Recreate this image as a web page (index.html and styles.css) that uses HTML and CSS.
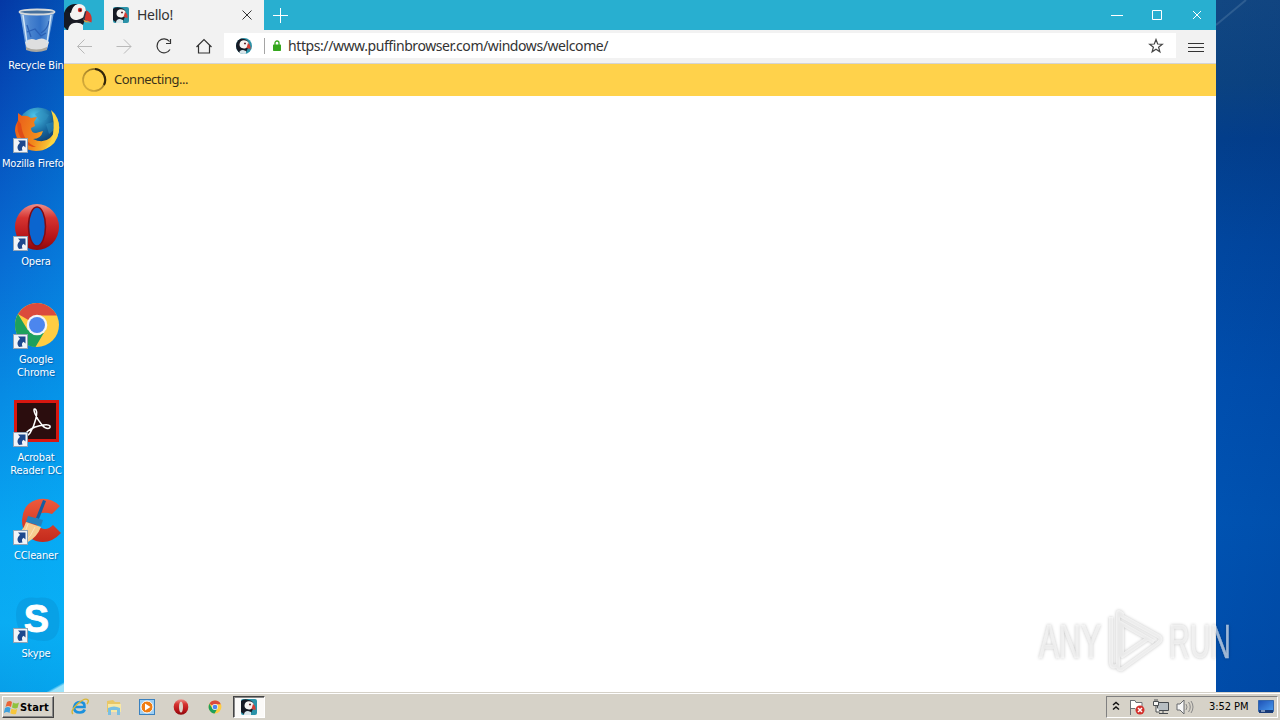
FILE: index.html
```html
<!DOCTYPE html>
<html lang="en">
<head>
<meta charset="utf-8">
<title>Desktop</title>
<link rel="stylesheet" href="styles.css">
</head>
<body>
<svg class="defs" aria-hidden="true">
  <defs>
    <linearGradient id="bin" x1="0" x2="1"><stop offset="0" stop-color="#a9cdef"/><stop offset=".3" stop-color="#5a92d6"/><stop offset=".6" stop-color="#3d7acb"/><stop offset="1" stop-color="#8dbbe5"/></linearGradient>
    <radialGradient id="globe" cx=".4" cy=".2" r=".8"><stop offset="0" stop-color="#4cc3e8"/><stop offset=".55" stop-color="#17689f"/><stop offset="1" stop-color="#0b2f63"/></radialGradient>
    <linearGradient id="fox" x1="0" x2="1" y2=".3"><stop offset="0" stop-color="#e8581b"/><stop offset=".6" stop-color="#f28a1c"/><stop offset="1" stop-color="#fbd23c"/></linearGradient>
    <linearGradient id="opera" x2="0" y2="1"><stop offset="0" stop-color="#ee8f88"/><stop offset=".3" stop-color="#d63431"/><stop offset=".7" stop-color="#b8161a"/><stop offset="1" stop-color="#8d090c"/></linearGradient>
    <linearGradient id="cc" x2="0" y2="1"><stop offset="0" stop-color="#ee5a3c"/><stop offset="1" stop-color="#c42a1c"/></linearGradient>
    <linearGradient id="spin" x1="0" y1="1" x2="1" y2="0"><stop offset="0" stop-color="#b08a2c" stop-opacity=".4"/><stop offset=".6" stop-color="#8d6d20" stop-opacity=".8"/><stop offset="1" stop-color="#2c2208"/></linearGradient>
    <linearGradient id="screen" x2="1" y2="1"><stop offset="0" stop-color="#1d50b5"/><stop offset="1" stop-color="#4a9df0"/></linearGradient>
  </defs>
  <symbol id="puffin" viewBox="0 0 40 30">
    <path d="M0 13C2 7 6 4 12 4c8 0 12 5 10 12-1 4-2 6-3 9l-3 5H3L0 27z" fill="#151a25"/>
    <path d="M4 30q1-6 6-7 6-1 9 2v5z" fill="#eef2f4"/>
    <path d="M6 14C6 8 10 4 15 4c6 0 8 5 6.500 11-2 3-5 4-8.500 5-4 0-7-2-7-6z" fill="#f4f3f1"/>
    <path d="M2 11c2-5 6-7 11-7-4 2-5 5-6 9z" fill="#10151e"/>
    <circle cx="16" cy="10" r="2.200" fill="#d32d26"/><circle cx="16.300" cy="10.300" r="1" fill="#161616"/>
    <path d="M21 11l2.500 1-1 9-4-1z" fill="#2b3446"/>
    <path d="M22.500 10.500c4 2 6 6 5 12l-7-3z" fill="#d2332c"/>
    <path d="M19 19.500l8 3-6-.3z" fill="#e99a3b"/>
  </symbol>
  <symbol id="puffapp" viewBox="0 0 16 16">
    <rect width="16" height="16" rx="2" fill="#2b93a9"/>
    <path d="M0 2Q3-1 8 1c5 1 6 5 4 9l-2 4-4-2-2 4-4-3z" fill="#161a24"/>
    <path d="M3.500 6.500c0-5 6.500-5.500 9-2 1 3-.5 5-3.500 6-3 0-5.500-1-5.500-4z" fill="#f6f4f2"/>
    <path d="M3 16q0-4 4-4l3 1v3z" fill="#d9e6ea"/>
    <circle cx="9" cy="5.500" r="1.100" fill="#9b4a50"/><circle cx="9" cy="5.500" r=".6" fill="#111"/>
    <path d="M12 5q3 2 2.500 6L10.500 10z" fill="#d63d35"/>
  </symbol>
  <symbol id="link" viewBox="0 0 15 15">
    <rect x=".5" y=".5" width="14" height="14" fill="#f1f4f8" stroke="#92a3b5"/>
    <path d="M5 2.500h7.500V9.500L10.500 7.800Q8 9.500 9.500 12.500L6 13Q2.500 9 7 4.800z" fill="#1d488d"/>
  </symbol>
  <symbol id="chrome" viewBox="0 0 48 48">
    <circle cx="24" cy="24" r="22" fill="#ffcd42"/>
    <path d="M24 24L5 13A22 22 0 0 1 43.800 14.500H24z" fill="#db4a3c"/>
    <path d="M5 13A22 22 0 0 0 22.500 46L32.500 29 24 24 14.700 29z" fill="#1da05c"/>
    <circle cx="24" cy="24" r="10.300" fill="#f4f5f6"/><circle cx="24" cy="24" r="8" fill="#4c86ee"/>
  </symbol>
  <symbol id="operaicon" viewBox="0 0 48 48">
    <ellipse cx="24" cy="24" rx="22" ry="23" fill="url(#opera)"/>
  </symbol>
</svg>

<main class="desktop">
  <nav class="shortcuts">
    <div class="shortcut">
      <svg class="shortcut-icon" viewBox="0 0 48 48">
        <path d="M7 5l6 37q10 5 21 0l7-37z" fill="url(#bin)" opacity=".8"/>
        <path d="M12 35q5-5 11-2 7-4 13 2l-2 7q-10 4-20 0z" fill="#dedfdf"/>
        <path d="M13 40q10 5 21 0v3q-11 4-21 0z" fill="#aaa79f"/>
        <path d="M14 18l4 12M36 14q-1 8-8 12M14 25l8-3 6 7 5-3" fill="none" stroke="#2a60b5" stroke-width="1.300"/>
        <path d="M10 8l4 28M38 8l-4 28" stroke="#d2e6f7" stroke-width="1.500"/>
        <ellipse cx="24" cy="5" rx="17.500" ry="2.500" fill="#456f9c" stroke="#d7dadb" stroke-width="1.800"/>
      </svg>
      <span class="shortcut-label">Recycle Bin</span>
    </div>
    <div class="shortcut">
      <svg class="shortcut-icon" viewBox="0 0 48 48">
        <circle cx="25" cy="23" r="20.500" fill="url(#globe)"/>
        <path d="M22 9l6-3 8 4-3 5-6 1zM33 19l7-2 2 7-6 5z" fill="#2f91bf" opacity=".5"/>
        <path d="M5 8l4 3q5-1 9 2l6-1-3 5 1 4-4 2q0 5 5 5l7-2q-2 8-10 8 10 5 17-1 8-7 6-21 6 9 1 20-7 14-21 14Q5 45 2 26q0-6 3-10z" fill="url(#fox)"/>
        <path d="M38 5q9 7 8 21-2 14-14 18 7-7 8-15 2-13-2-24z" fill="#fbd442"/>
        <path d="M5 15q-3 11 5 21 5 6 13 6Q10 37 8 19z" fill="#df4c17"/>
      </svg>
      <svg class="shortcut-link"><use href="#link"/></svg>
      <span class="shortcut-label firefox">Mozilla Firefo</span>
    </div>
    <div class="shortcut">
      <svg class="shortcut-icon" viewBox="0 0 48 48">
        <use href="#operaicon" width="48" height="48"/>
        <ellipse cx="24" cy="23.500" rx="8.500" ry="19.500" fill="#0b65cf" stroke="#830b12" stroke-width="1.500"/>
      </svg>
      <svg class="shortcut-link"><use href="#link"/></svg>
      <span class="shortcut-label">Opera</span>
    </div>
    <div class="shortcut">
      <svg class="shortcut-icon"><use href="#chrome"/></svg>
      <svg class="shortcut-link"><use href="#link"/></svg>
      <span class="shortcut-label">Google<br>Chrome</span>
    </div>
    <div class="shortcut">
      <svg class="shortcut-icon" viewBox="0 0 48 48">
        <rect x="1" y="1" width="45" height="42" fill="#d81710"/><rect x="4" y="4" width="39" height="36" fill="#2b0d0e"/>
        <path d="M22 10c-3-1 1 9 7 16 4 5 9 4 8 1-2-3-18 0-24 7-1 3 2 3 4 0 5-8 9-22 5-24z" fill="none" stroke="#fff" stroke-width="1.500"/>
      </svg>
      <svg class="shortcut-link"><use href="#link"/></svg>
      <span class="shortcut-label">Acrobat<br>Reader DC</span>
    </div>
    <div class="shortcut">
      <svg class="shortcut-icon" viewBox="0 0 48 48">
        <path d="M47 9Q36-1 23 3 10 7 9 23q0 16 14 21 14 4 25-8l-8-8q-6 6-12 3-7-3-5-10 4-8 16-4z" fill="url(#cc)"/>
        <path d="M30 3l3 1-7 18-3-1z" fill="#155d9f"/>
        <path d="M15 19l15 4-2 6-15-4z" fill="#2582bc"/>
        <path d="M13 25l15 5q-4 10-13 15L1 38q9-3 12-13z" fill="#f6ce91"/><path d="M15 27q-2 9-8 14M22 30q-4 9-9 14" fill="none" stroke="#fce4b9"/>
      </svg>
      <svg class="shortcut-link"><use href="#link"/></svg>
      <span class="shortcut-label">CCleaner</span>
    </div>
    <div class="shortcut">
      <svg class="shortcut-icon" viewBox="0 0 48 48">
        <path d="M24 3q20-3 22 16 3 27-15 27Q3 46 3 20 3 0 24 3z" fill="#0898dc" opacity=".6"/>
        <text class="skype-letter" x="23.500" y="36.500" text-anchor="middle">S</text>
      </svg>
      <svg class="shortcut-link"><use href="#link"/></svg>
      <span class="shortcut-label">Skype</span>
    </div>
  </nav>

  <section class="browser">
    <header class="tabs">
      <svg class="brand"><use href="#puffin"/></svg>
      <div class="tab">
        <svg class="favicon"><use href="#puffapp"/></svg>
        <span class="tab-title">Hello!</span>
        <svg class="tab-close" viewBox="0 0 10 10"><path d="M.5.5l9 9m0-9l-9 9"/></svg>
      </div>
      <svg class="new-tab" viewBox="0 0 15 15"><path d="M7.500 0v15M0 7.500h15"/></svg>
      <div class="window-buttons">
        <svg viewBox="0 0 40 30"><path d="M15 15.500h12"/></svg>
        <svg viewBox="0 0 40 30"><path d="M16.500 10.500h9v9h-9z"/></svg>
        <svg viewBox="0 0 40 30"><path d="M17 11l8 8m0-8l-8 8"/></svg>
      </div>
    </header>
    <div class="toolbar">
      <svg class="tool muted" viewBox="0 0 40 33"><path d="M28 16.500H13.500m7-7l-7 7 7 7"/></svg>
      <svg class="tool muted" viewBox="0 0 40 33"><path d="M12.500 16.500h14.500m-7-7l7 7-7 7"/></svg>
      <svg class="tool" viewBox="0 0 40 33"><path d="M25.500 11.500a7 7 0 1 0 .5 8M26.500 9v4.500H22"/></svg>
      <svg class="tool" viewBox="0 0 40 33"><path d="M12.500 17l7.500-7.500 7.500 7.500m-13-1.500v7.500h11v-7.500"/></svg>
      <div class="address">
        <svg class="site-icon"><use href="#puffapp"/></svg>
        <span class="divider"></span>
        <svg class="lock" viewBox="0 0 8 11"><path d="M2 5V3a2 2 0 0 1 4 0v2" fill="none" stroke="#35a71e" stroke-width="1.300"/><rect y="4.500" width="8" height="6.500" rx=".7" fill="#35a71e"/></svg>
        <span class="url">https://www.puffinbrowser.com/windows/welcome/</span>
        <svg class="star" viewBox="0 0 16 16"><path d="M8 1.500l1.700 4.500 4.600.2-3.700 3 1.300 4.600L8 11.300 4.100 13.800l1.300-4.600-3.700-3L6.300 6z"/></svg>
      </div>
      <svg class="menu" viewBox="0 0 40 33"><path d="M12 13.500h16m-16 4h16m-16 4h16"/></svg>
    </div>
    <div class="notice">
      <svg class="spinner" viewBox="0 0 26 26"><circle cx="13" cy="13" r="11" fill="none" stroke="url(#spin)" stroke-width="1.700"/><path d="M14 2a11 11 0 0 1 9 16" fill="none" stroke="#33270b" stroke-width="2"/></svg>
      <span class="notice-text">Connecting...</span>
    </div>
    <div class="page"></div>
  </section>

  <svg class="wallpaper" viewBox="0 0 64 692"><path d="M0 25L30 0" stroke="#628ab0" stroke-width="2" opacity=".35"/></svg>
  <svg class="watermark" viewBox="0 0 220 80">
    <g class="mark">
      <text x="11" y="58" textLength="62" lengthAdjust="spacingAndGlyphs">ANY</text>
      <text x="141" y="58" textLength="62" lengthAdjust="spacingAndGlyphs">RUN</text>
      <path d="M83 17v46q1 6 7 2M90 14l40 22q5 3 0 7L94 69q-4 1-4-3V14q0-4 4 0zM94 25v31l25-17M91 22l35 20"/>
    </g>
  </svg>
</main>

<footer class="taskbar">
  <button class="start">
    <svg class="flag" viewBox="0 0 16 15"><path d="M3 2q3-2 5 0L7 7Q4 5 1.500 7z" fill="#ea6436"/><path d="M9 2.500q3 2 6 0L13.500 8Q11 9 8 7.500z" fill="#8fc23e"/><path d="M1 8q3-2 5.500 0L5.500 13Q3 11-.2 13z" fill="#3da0dc"/><path d="M7.500 8.500q3 2 5.700.2L12 14q-3 1-5.700-.7z" fill="#f7c63a"/></svg>
    <span>Start</span>
  </button>
  <div class="quick">
    <svg viewBox="0 0 18 18"><path d="M3.500 9h10Q14 4 9 4T3 9.500Q3 14.500 9 14.500q3.500 0 4.700-3" fill="none" stroke="#1b91dd" stroke-width="2.700"/><path d="M2 16Q-1 13 6 6.500 14-1 17 2q1 1-1 4" fill="none" stroke="#d9b735" stroke-width="1.400"/></svg>
    <svg viewBox="0 0 18 18"><path d="M2 3l6-1 2 2h5l1 10H2z" fill="#e8c767"/><path d="M3 6h13v8H3z" fill="#f8e8a4"/><path d="M3 10q6-3 12 0v7h-3v-5H6v5H3z" fill="#79bfe2"/></svg>
    <svg viewBox="0 0 18 18"><rect x="1.500" y="1.500" width="15" height="15" fill="#9dcff4" stroke="#3a81bf"/><circle cx="9" cy="9" r="6" fill="#ef7d13" stroke="#fff"/><path d="M7 5.500l5.500 3.500L7 12.500z" fill="#fff"/></svg>
    <svg viewBox="0 0 18 18"><use href="#operaicon" x="1" y="1" width="16" height="16"/><ellipse cx="9" cy="9" rx="2" ry="5.500" fill="#d9d3c9"/></svg>
    <svg viewBox="0 0 18 18"><use href="#chrome" x="2" y="2" width="14" height="14"/></svg>
  </div>
  <div class="active-task"><svg><use href="#puffapp"/></svg></div>
  <div class="tray">
    <svg class="chevrons" viewBox="0 0 8 10"><path d="M1 4l3-2.500L7 4M1 8.500L4 6l3 2.500"/></svg>
    <svg class="tray-icon" viewBox="0 0 18 18"><path d="M2.500 2v15M3 2.500h4l1 2h6v7H8l-1-1H3" fill="#fff" stroke="#6d7076"/><circle cx="12" cy="12" r="4.500" fill="#d32f2b"/><path d="M10 10l4 4m0-4l-4 4" stroke="#fff" stroke-width="1.500"/></svg>
    <svg class="tray-icon" viewBox="0 0 18 18"><path d="M5.500 4.500h11v8h-11zM7 15.500h9M11 13v2" fill="#b7bec2" stroke="#45494d"/><path d="M1.500 3.500h5v4h-5zM3 1v2m2-2v2M4 8v6h4" fill="#f7f7f5" stroke="#4c5053"/></svg>
    <svg class="tray-icon" viewBox="0 0 18 18"><path d="M1 6h3l4-4v14l-4-4H1z" fill="#f7f7f7" stroke="#66696c"/><path d="M10 6q2 3 0 6m2.500-8q3.500 5 0 10M15 3q4 6 0 12" fill="none" stroke="#888"/></svg>
    <span class="clock">3:52 PM</span>
    <svg class="show-desktop" viewBox="0 0 16 14"><path d="M.5.5h15v11H.5z" fill="url(#screen)" stroke="#3567aa"/><path d="M1 10h14v3H1z" fill="#183b78"/><path d="M3 11h4" stroke="#d8e9fc"/></svg>
  </div>
</footer>
</body>
</html>
```

FILE: styles.css
```css
* { box-sizing: border-box; }
body { margin: 0; width: 1280px; height: 720px; overflow: hidden; display: flex; flex-direction: column; font-family: "Noto Sans", "Open Sans", sans-serif; }
svg { display: block; flex: none; overflow: hidden; }
.defs { position: absolute; width: 0; height: 0; }
.desktop { position: relative; display: flex; height: 692px; }

.shortcuts { width: 64px; height: 692px; overflow: hidden; background: linear-gradient(151deg, transparent 0 98.600%, #9ce3fa 99%), linear-gradient(90deg, transparent, rgba(0, 190, 255, .18)), linear-gradient(#0438a5, #0548b5 12%, #086bd3 37%, #078be4 57%, #08a6f2 77%, #0aacf3 90%, #079fe9); }
.shortcut { position: relative; width: 72px; height: 98px; padding-top: 7px; display: flex; flex-direction: column; align-items: center; }
.shortcut-icon { width: 48px; height: 48px; margin-left: 2px; }
.shortcut-link { position: absolute; left: 13px; top: 40px; width: 15px; height: 15px; }
.shortcut-label { margin-top: 4px; color: #fff; font: 11px/13px "DejaVu Sans Condensed", "DejaVu Sans", sans-serif; font-stretch: condensed; text-align: center; white-space: nowrap; text-shadow: 1px 1px 1px rgba(0, 30, 90, .4); letter-spacing: -.15px; }
.firefox { align-self: flex-start; margin-left: 2px; letter-spacing: -.2px; }
.skype-letter { font: bold 38px "Liberation Sans", sans-serif; fill: #fff; stroke: #fff; stroke-width: .8px; }

.browser { width: 1152px; display: flex; flex-direction: column; background: #fff; }
.tabs { height: 30px; display: flex; background: #28afd0; }
.brand { width: 40px; height: 30px; }
.tab { width: 160px; height: 30px; padding: 0 12px 0 9px; display: flex; align-items: center; background: #f2f2f2; }
.favicon { width: 16px; height: 16px; }
.tab-title { margin-left: 8px; font-size: 14px; line-height: 30px; letter-spacing: -.3px; color: #333; }
.tab-close { width: 10px; height: 10px; margin-left: auto; fill: none; stroke: #333; }
.new-tab { width: 15px; height: 15px; margin: 8px 0 0 9px; stroke: #fff; }
.window-buttons { display: flex; margin-left: auto; }
.window-buttons svg { width: 40px; height: 30px; fill: none; stroke: #fff; }
.toolbar { height: 34px; display: flex; background: #f2f2f2; border-bottom: 1px solid #d4d4d4; }
.tool, .menu { width: 40px; height: 33px; fill: none; stroke: #333; stroke-width: 1.2; }
.muted { stroke: #b9b9b9; stroke-width: 1; }
.menu { stroke-width: 1; }
.address { width: 952px; height: 25px; margin-top: 3px; padding: 0 12px; display: flex; align-items: center; background: #fff; }
.site-icon { width: 16px; height: 16px; border-radius: 50%; }
.divider { width: 1px; height: 16px; margin-left: 12px; background: #a5a5a5; }
.lock { width: 8px; height: 11px; margin-left: 8px; }
.url { margin-left: 7px; font-size: 14px; line-height: 25px; letter-spacing: -.415px; color: #333; white-space: nowrap; }
.star { width: 16px; height: 16px; margin-left: auto; fill: none; stroke: #444; stroke-width: 1.2; }
.notice { height: 32px; padding-left: 17px; display: flex; align-items: center; background: #ffd24b; }
.spinner { width: 26px; height: 26px; }
.notice-text { margin: -2px 0 0 7px; font-size: 13px; letter-spacing: -.48px; color: #3c321a; }
.page { flex: 1; }

.wallpaper { width: 64px; height: 692px; background: linear-gradient(100deg, transparent, rgba(0, 35, 110, .2)), linear-gradient(#124782, #0b4381 12%, #033f8c 20%, #0148a1 35%, #0051b2 55%, #0058b9 75%, #0052b2); }
.watermark { position: absolute; left: 1028px; top: 600px; width: 220px; height: 80px; filter: drop-shadow(0 0 1.5px rgba(0, 0, 0, .38)); }
.mark { font: 48px "Liberation Sans", sans-serif; fill: #fff; opacity: .62; }
.mark text { stroke: #fff; stroke-width: .5px; }
.mark path { fill: none; stroke: #fff; stroke-width: 4; stroke-linejoin: round; }

.taskbar { height: 28px; display: flex; align-items: flex-start; padding: 4px 2px 0; background: #d6d2c8; box-shadow: inset 0 1px #d5d1c8, inset 0 2px #fff; }
.start { width: 52px; height: 22px; padding: 0 0 0 1px; display: flex; align-items: center; gap: 0; background: #d6d2c8; border: 1px solid; border-color: #fff #444 #444 #fff; box-shadow: inset -1px -1px #888; font: bold 11px "DejaVu Sans Condensed", "DejaVu Sans", sans-serif; font-stretch: condensed; letter-spacing: .15px; }
.flag { width: 16px; height: 15px; }
.quick { display: flex; margin: 2px 0 0 17px; gap: 15.700px; }
.quick svg { width: 18px; height: 18px; }
.active-task { width: 32px; height: 22px; margin-left: 9px; display: flex; align-items: center; justify-content: center; background: #fbfaf8; border: 1px solid; border-color: #444 #fff #fff #444; box-shadow: inset 1px 1px #888; }
.active-task svg { width: 16px; height: 16px; }
.tray { width: 172px; height: 22px; margin-left: auto; padding-left: 5px; display: flex; align-items: center; border: 1px solid; border-color: #808080 #fff #fff #808080; }
.chevrons { width: 8px; height: 10px; margin: -2px 8px 0 0; fill: none; stroke: #111; stroke-width: 1.500; }
.tray-icon { width: 18px; height: 18px; margin-right: 6px; }
.clock { width: 42px; margin-left: 9px; font: 11px/18px "DejaVu Sans Condensed", "DejaVu Sans", sans-serif; font-stretch: condensed; letter-spacing: -.05px; white-space: nowrap; }
.show-desktop { width: 16px; height: 14px; margin-left: 7px; }
```
